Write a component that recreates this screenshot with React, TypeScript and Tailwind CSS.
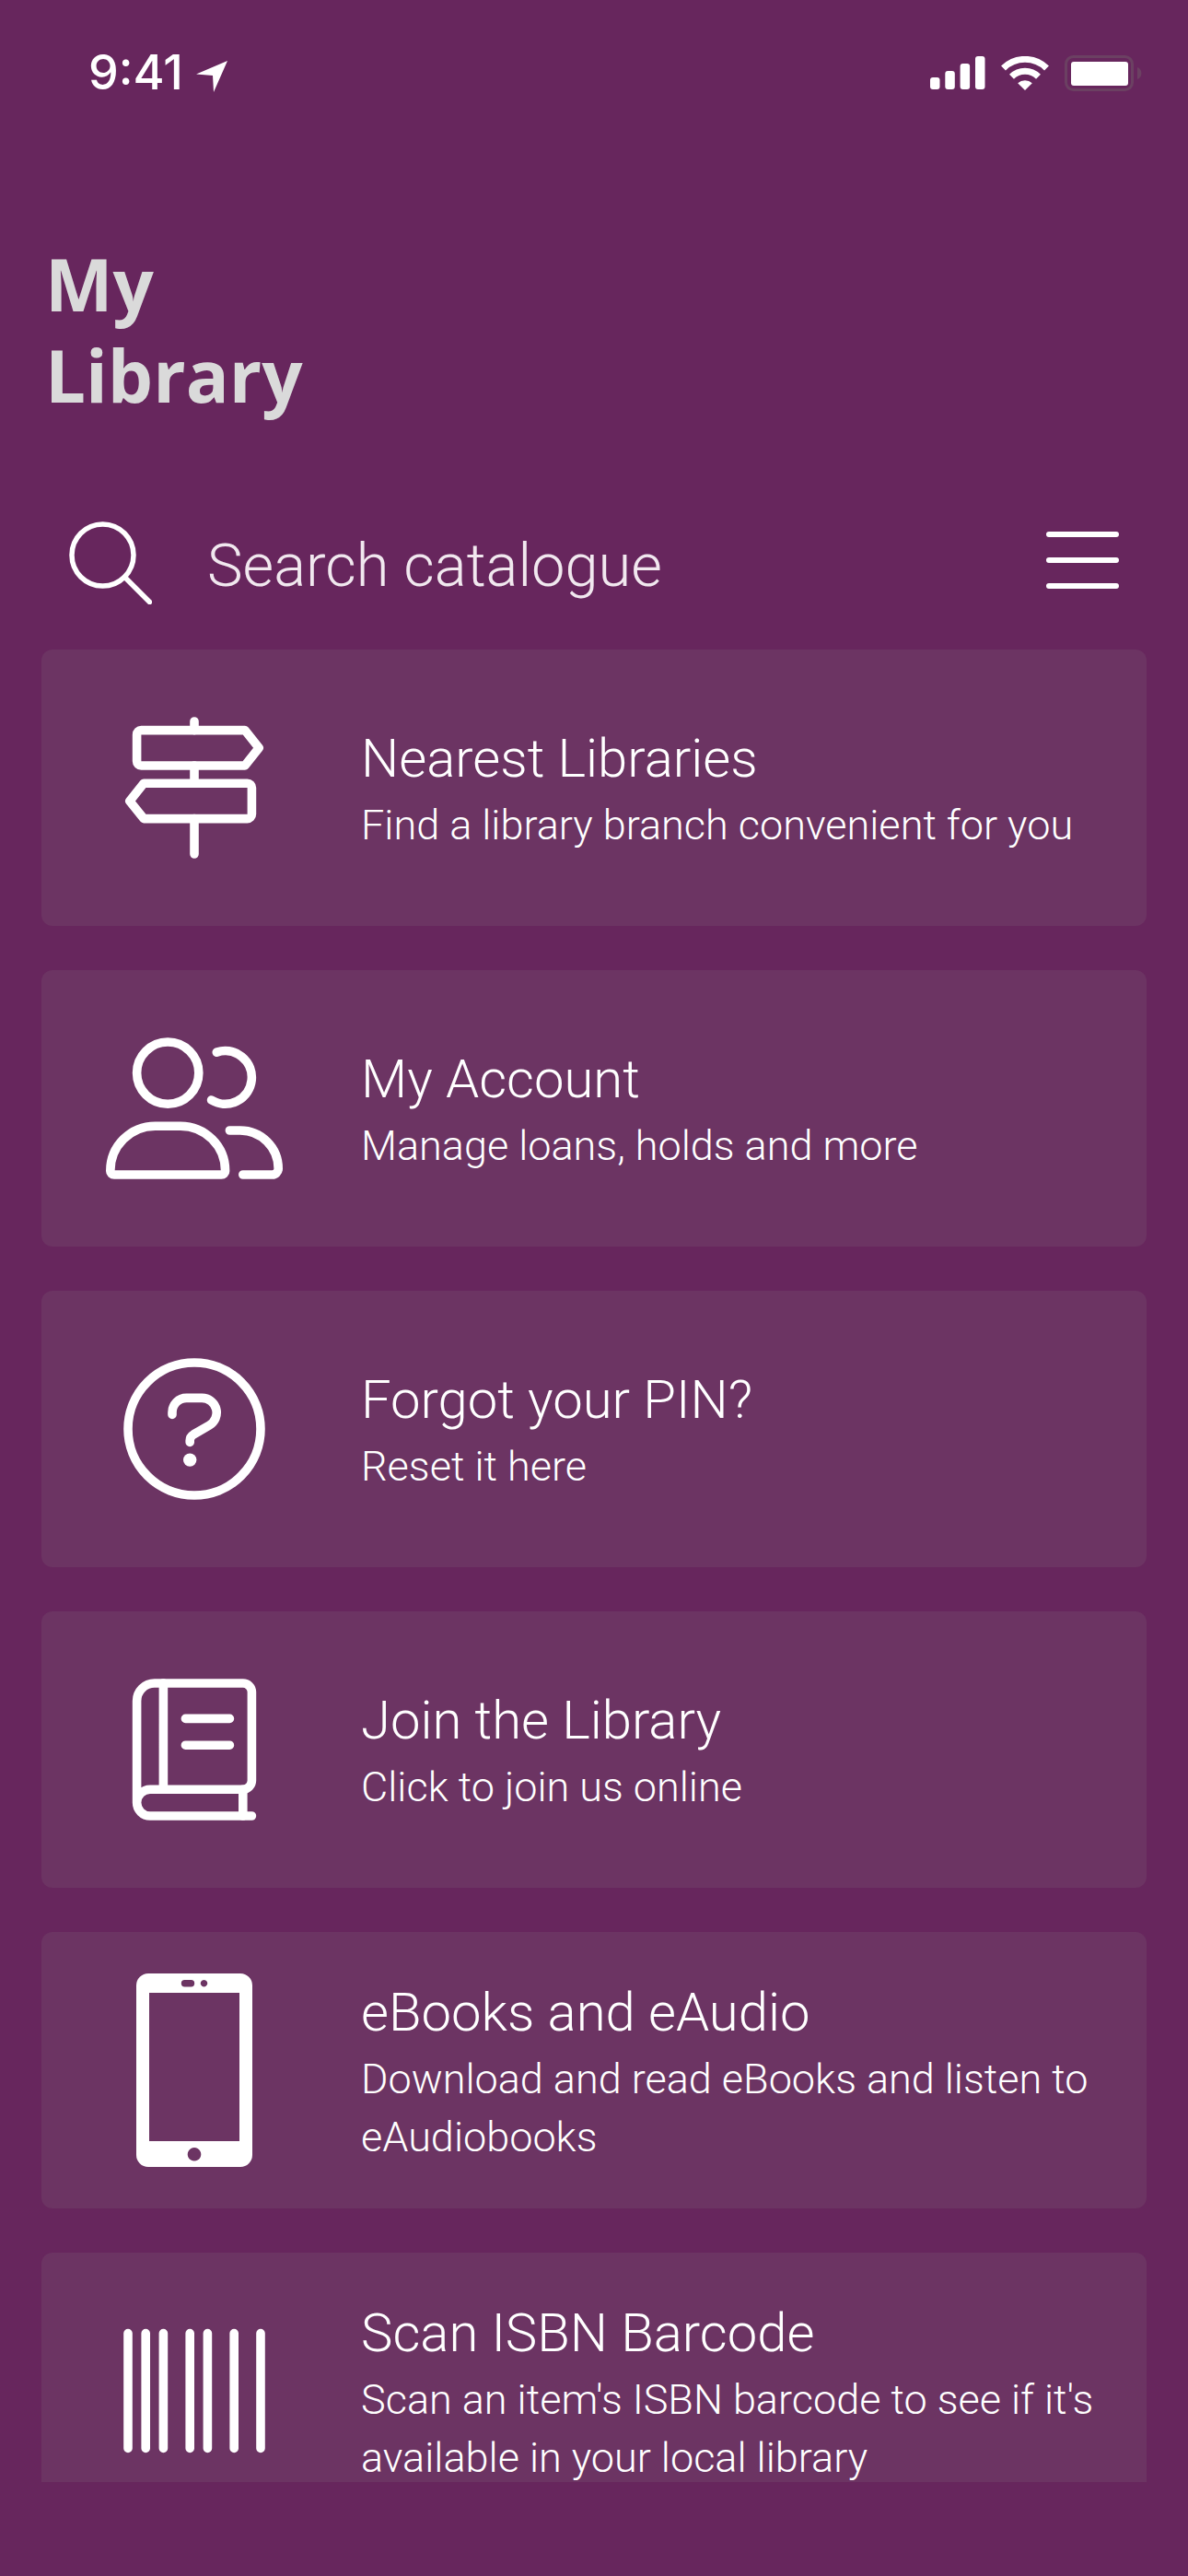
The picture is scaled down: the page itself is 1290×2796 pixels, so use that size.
import type { ReactNode } from "react";

type MenuItem = {
  title: string;
  text: string;
  icon: ReactNode;
};

function LineIcon({ children }: { children: ReactNode }) {
  return (
    <svg
      viewBox="0 0 640 512"
      className="h-[154px] w-48"
      fill="none"
      stroke="currentColor"
      strokeWidth={32}
      strokeLinecap="round"
      strokeLinejoin="round"
      aria-hidden="true"
    >
      {children}
    </svg>
  );
}

function SignpostIcon() {
  return (
    <LineIcon>
      <path d="M320 16v32M320 176v64M320 368v128" />
      <path d="M128 48h375l51 64-51 64H128a16 16 0 0 1-16-16V64a16 16 0 0 1 16-16z" />
      <path d="M512 240H137l-51 64 51 64h375a16 16 0 0 0 16-16v-96a16 16 0 0 0-16-16z" />
    </LineIcon>
  );
}

function PeopleIcon() {
  return (
    <LineIcon>
      <circle cx="224" cy="128" r="112" />
      <path d="M16 482.3A162.3 162.3 0 0 1 178.3 320h91.4A162.3 162.3 0 0 1 432 482.3a13.7 13.7 0 0 1-13.7 13.7H29.7A13.7 13.7 0 0 1 16 482.3z" />
      <path d="M401 53a96 96 0 1 1-19 173" />
      <path d="M448 336h38a138 138 0 0 1 138 138a22 22 0 0 1-22 22H496" />
    </LineIcon>
  );
}

function QuestionIcon() {
  return (
    <LineIcon>
      <circle cx="320" cy="256" r="240" />
      <path d="M240 204v-8a52 52 0 0 1 52-52h55a53 53 0 0 1 27 99l-57 33q-13 8-13 22v6" />
      <circle cx="304" cy="368" r="24" fill="currentColor" stroke="none" />
    </LineIcon>
  );
}

function BookIcon() {
  return (
    <LineIcon>
      <path d="M528 496H160a48 48 0 0 1-48-48V80a64 64 0 0 1 64-64h320a32 32 0 0 1 32 32v320a32 32 0 0 1-32 32H160a48 48 0 0 0-48 48" />
      <path d="M208 16v384M496 400v96M288 144h160M288 240h160" />
    </LineIcon>
  );
}

function PhoneIcon() {
  return (
    <svg viewBox="0 0 126 210" className="h-[210px] w-48" fill="currentColor" aria-hidden="true">
      <path
        fillRule="evenodd"
        d="M13 0h100a13 13 0 0 1 13 13v184a13 13 0 0 1-13 13H13a13 13 0 0 1-13-13V13A13 13 0 0 1 13 0zM14 21v161h98V21zM52.500 7a3.700 3.700 0 0 0 0 7.400h7a3.700 3.700 0 0 0 0-7.400zM73.500 7a3.700 3.700 0 1 0 .01 0zM63 189a7.300 7.300 0 1 0 .01 0z"
      />
    </svg>
  );
}

function BarcodeIcon() {
  return (
    <LineIcon>
      <path d="M80 48v416M144 48v416M208 48v416M304 48v416M368 48v416M464 48v416M560 48v416" />
    </LineIcon>
  );
}

const items: MenuItem[] = [
  {
    title: "Nearest Libraries",
    text: "Find a library branch convenient for you",
    icon: <SignpostIcon />,
  },
  {
    title: "My Account",
    text: "Manage loans, holds and more",
    icon: <PeopleIcon />,
  },
  {
    title: "Forgot your PIN?",
    text: "Reset it here",
    icon: <QuestionIcon />,
  },
  {
    title: "Join the Library",
    text: "Click to join us online",
    icon: <BookIcon />,
  },
  {
    title: "eBooks and eAudio",
    text: "Download and read eBooks and listen to eAudiobooks",
    icon: <PhoneIcon />,
  },
  {
    title: "Scan ISBN Barcode",
    text: "Scan an item's ISBN barcode to see if it's available in your local library",
    icon: <BarcodeIcon />,
  },
];

function StatusBar() {
  return (
    <div className="flex h-[158px] shrink-0 items-center justify-between pr-[50px] pl-24">
      <div className="flex items-center gap-3.5">
        <span className="font-['Inter',sans-serif] text-[52px] leading-none font-medium">9:41</span>
        <svg viewBox="0 0 34 34" className="mt-2 size-[34px]" fill="currentColor" aria-hidden="true">
          <path d="M34 0L0 14.500 18 16 19 34z" />
        </svg>
      </div>
      <div className="flex items-center gap-[17px]">
        <svg viewBox="0 0 60 36" className="h-9 w-[60px]" fill="currentColor" aria-hidden="true">
          <rect x="0" y="23" width="10.500" height="13" rx="3" />
          <rect x="16.300" y="16" width="10.500" height="20" rx="3" />
          <rect x="32.600" y="8" width="10.500" height="28" rx="3" />
          <rect x="49" y="0" width="10.500" height="36" rx="3" />
        </svg>
        <svg viewBox="0 0 52 37" className="h-[37px] w-[52px]" aria-hidden="true">
          <g fill="none" stroke="currentColor" strokeWidth="7">
            <path d="M2.500 13a33.500 33.500 0 0 1 47 0" />
            <path d="M11.500 22.300a20.600 20.600 0 0 1 29 0" />
          </g>
          <path d="M26 37l-7.800-7.800a11.500 11.500 0 0 1 15.600 0z" fill="currentColor" />
        </svg>
        <svg viewBox="0 0 84 39" className="h-[39px] w-[84px]" aria-hidden="true">
          <rect x="1.500" y="1.500" width="72" height="36" rx="8" fill="none" stroke="#6b4062" strokeWidth="3" />
          <rect x="7" y="7" width="62" height="26" rx="3" fill="currentColor" />
          <path d="M79 13a7 7 0 0 1 0 13z" fill="#6b4062" />
        </svg>
      </div>
    </div>
  );
}

function SearchBar() {
  return (
    <form role="search" className="mt-[109px] mb-[49px] flex shrink-0 items-center px-[75px]">
      <button type="submit" aria-label="Search">
        <svg
          viewBox="0 0 90 90"
          className="size-[90px]"
          fill="none"
          stroke="currentColor"
          strokeWidth={5.5}
          strokeLinecap="round"
          aria-hidden="true"
        >
          <circle cx="36.500" cy="36.500" r="33.500" />
          <path d="M60.500 60.500l27 27" />
        </svg>
      </button>
      <input
        type="search"
        aria-label="Search catalogue"
        placeholder="Search catalogue"
        className="ml-[60px] h-[90px] min-w-0 flex-1 pt-2 text-[65px] font-light placeholder:text-[#f1e8ef] focus:outline-none"
      />
      <button type="button" aria-label="Menu">
        <svg
          viewBox="0 0 80 68"
          className="h-[68px] w-20"
          stroke="currentColor"
          strokeWidth={6}
          strokeLinecap="round"
          aria-hidden="true"
        >
          <path d="M4 3h73M4 31h73M4 59h73" />
        </svg>
      </button>
    </form>
  );
}

function MenuCard({ item }: { item: MenuItem }) {
  return (
    <a href="#" className="flex h-[300px] shrink-0 items-center rounded-xl bg-[#6c3463] pr-8 pl-[70px]">
      <span className="shrink-0">{item.icon}</span>
      <span className="ml-[85px] min-w-0 flex-1">
        <span className="block text-[58px] leading-[81px]">{item.title}</span>
        <span className="block text-[45px] leading-[63px]">{item.text}</span>
      </span>
    </a>
  );
}

export default function App() {
  return (
    <div className="flex h-screen flex-col bg-[#67265d] pb-[102px] font-['Roboto',sans-serif] text-white">
      <StatusBar />
      <h1 className="mt-[101px] ml-[49px] w-min shrink-0 font-['Open_Sans',sans-serif] text-[78px] leading-[99px] font-bold text-[#dadada]">
        My Library
      </h1>
      <SearchBar />
      <nav className="flex min-h-0 flex-1 flex-col gap-12 overflow-hidden px-[45px] font-light">
        {items.map((item) => (
          <MenuCard key={item.title} item={item} />
        ))}
      </nav>
    </div>
  );
}
